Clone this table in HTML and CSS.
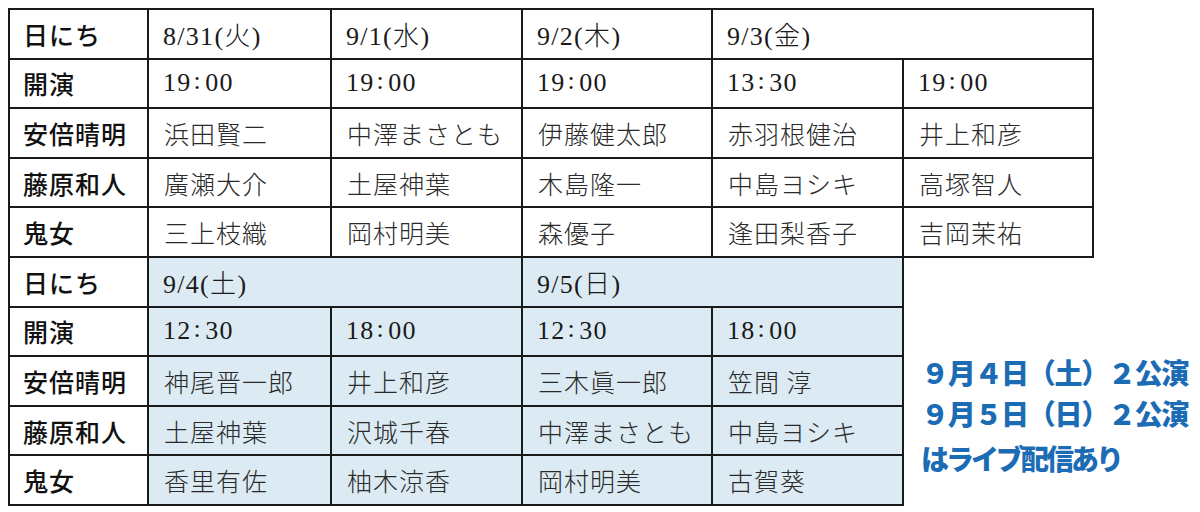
FILE: index.html
```html
<!DOCTYPE html>
<html lang="ja">
<head>
<meta charset="utf-8">
<link rel="stylesheet" href="styles.css">
</head>
<body>
<div class="page">
  <div class="grid t1">
    <div class="c h">日にち</div>
    <div class="c d">8/31(火)</div>
    <div class="c d">9/1(水)</div>
    <div class="c d">9/2(木)</div>
    <div class="c d span2">9/3(金)</div>

    <div class="c h">開演</div>
    <div class="c d">19<span class="colon">:</span>00</div>
    <div class="c d">19<span class="colon">:</span>00</div>
    <div class="c d">19<span class="colon">:</span>00</div>
    <div class="c d">13<span class="colon">:</span>30</div>
    <div class="c d">19<span class="colon">:</span>00</div>

    <div class="c h">安倍晴明</div>
    <div class="c n">浜田賢二</div>
    <div class="c n">中澤まさとも</div>
    <div class="c n">伊藤健太郎</div>
    <div class="c n">赤羽根健治</div>
    <div class="c n">井上和彦</div>

    <div class="c h">藤原和人</div>
    <div class="c n">廣瀬大介</div>
    <div class="c n">土屋神葉</div>
    <div class="c n">木島隆一</div>
    <div class="c n">中島ヨシキ</div>
    <div class="c n">高塚智人</div>

    <div class="c h">鬼女</div>
    <div class="c n">三上枝織</div>
    <div class="c n">岡村明美</div>
    <div class="c n">森優子</div>
    <div class="c n">逢田梨香子</div>
    <div class="c n">吉岡茉祐</div>
  </div>

  <div class="bottom">
    <div class="grid t2">
      <div class="c h">日にち</div>
      <div class="c d s span2">9/4(土)</div>
      <div class="c d s span2">9/5(日)</div>

      <div class="c h">開演</div>
      <div class="c d s">12<span class="colon">:</span>30</div>
      <div class="c d s">18<span class="colon">:</span>00</div>
      <div class="c d s">12<span class="colon">:</span>30</div>
      <div class="c d s">18<span class="colon">:</span>00</div>

      <div class="c h">安倍晴明</div>
      <div class="c n s">神尾晋一郎</div>
      <div class="c n s">井上和彦</div>
      <div class="c n s">三木眞一郎</div>
      <div class="c n s">笠間&nbsp;淳</div>

      <div class="c h">藤原和人</div>
      <div class="c n s">土屋神葉</div>
      <div class="c n s">沢城千春</div>
      <div class="c n s">中澤まさとも</div>
      <div class="c n s">中島ヨシキ</div>

      <div class="c h">鬼女</div>
      <div class="c n s">香里有佐</div>
      <div class="c n s">柚木涼香</div>
      <div class="c n s">岡村明美</div>
      <div class="c n s">古賀葵</div>
    </div>

    <div class="note">
      <div class="line">９月４日（土）２公演</div>
      <div class="line">９月５日（日）２公演</div>
      <div class="line last">はライブ配信あり</div>
    </div>
  </div>
</div>
</body>
</html>
```

FILE: styles.css
```css
html, body {
  margin: 0;
  padding: 0;
  background: #ffffff;
}

.page {
  padding: 8px;
}

.grid {
  display: grid;
  width: max-content;
  border-left: 2px solid #1a1a1a;
  grid-auto-rows: 49.6px;
}

.t1 {
  border-top: 2px solid #1a1a1a;
  grid-template-columns: 139px 183px 191px 190px 191px 190px;
}

.t2 {
  grid-template-columns: 139px 183px 191px 190px 191px;
}

.c {
  box-sizing: border-box;
  border-right: 2px solid #1a1a1a;
  border-bottom: 2px solid #1a1a1a;
  display: flex;
  align-items: center;
  padding-left: 14px;
  color: #1a1a1a;
  white-space: nowrap;
  background: #ffffff;
}

.span2 {
  grid-column: span 2;
}

.h {
  font-family: "Noto Sans CJK JP", sans-serif;
  font-weight: 500;
  font-size: 25px;
  letter-spacing: 1px;
  padding-left: 13px;
  color: #111111;
}

.d {
  font-family: "Liberation Serif", "Noto Sans CJK JP", serif;
  font-size: 26px;
  font-weight: 300;
  letter-spacing: 1.3px;
}

.colon {
  margin: 0 3px 0 2px;
  position: relative;
  top: -2px;
}

.n {
  font-family: "Noto Sans CJK JP", sans-serif;
  font-weight: 300;
  font-size: 25px;
  letter-spacing: 1px;
  padding-left: 15px;
  color: #2a2a2a;
}

.s {
  background: #dcebf3;
}

.bottom {
  display: flex;
  align-items: flex-start;
}

.note {
  margin-left: 17px;
  padding-top: 94px;
  font-family: "Noto Sans CJK JP", sans-serif;
  font-weight: 900;
  font-size: 28px;
  line-height: 41px;
  letter-spacing: -1.3px;
  color: #1b6cb5;
  white-space: nowrap;
}

.note .last {
  margin-top: 4px;
  letter-spacing: -3px;
}
```
